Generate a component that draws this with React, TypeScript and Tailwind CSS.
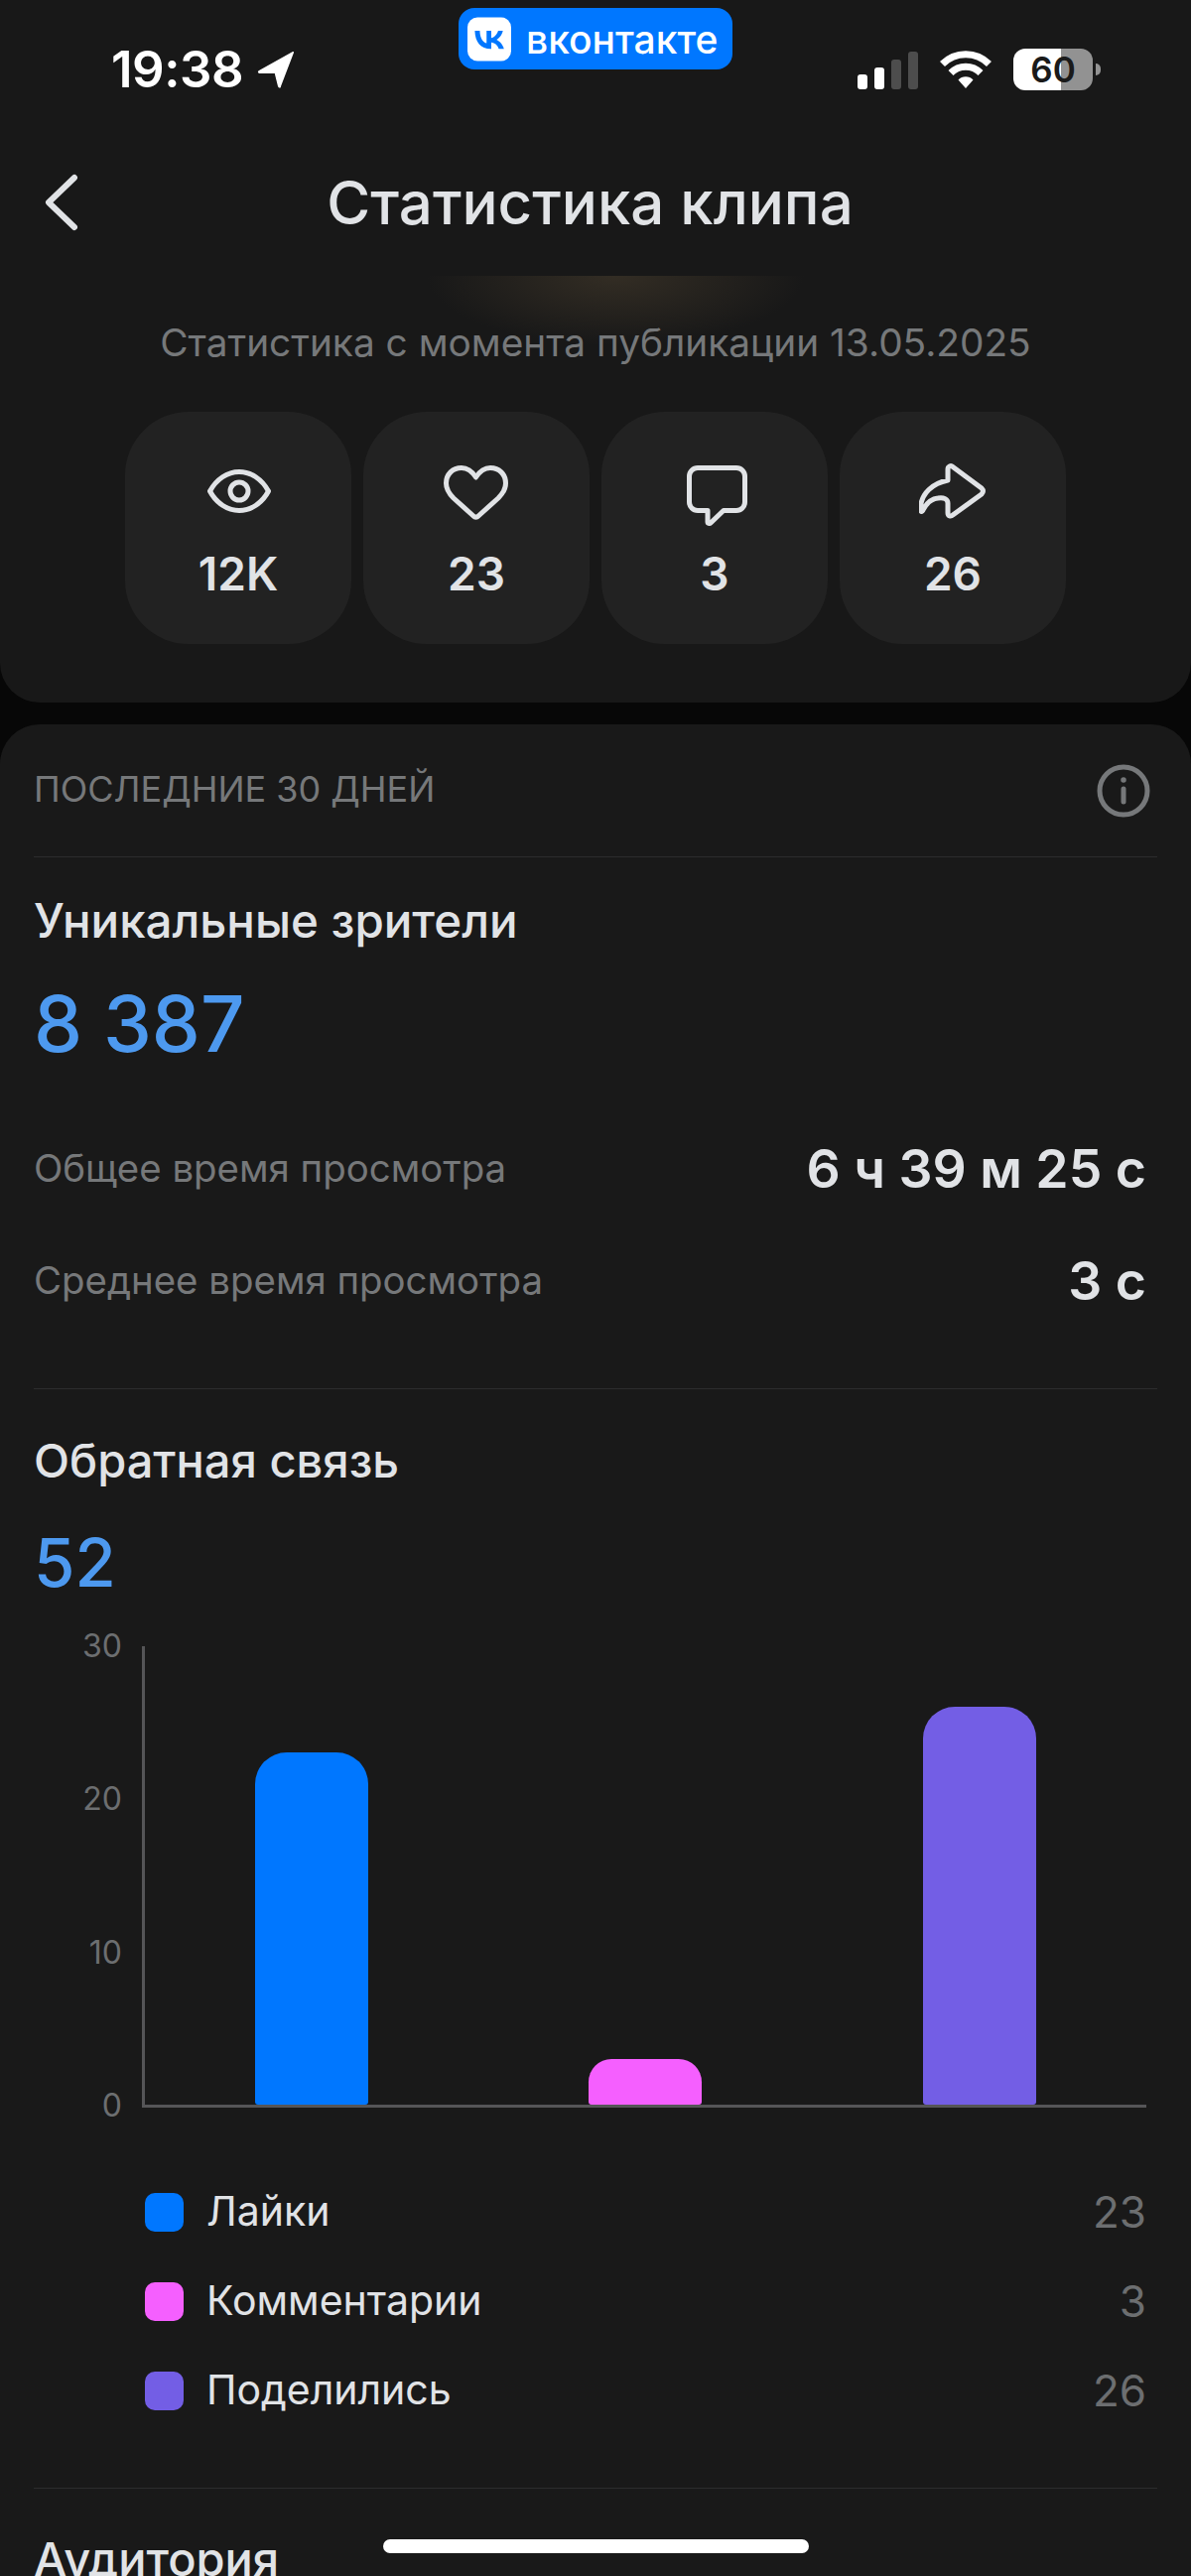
const stats = [
  { id: "views", value: "12K" },
  { id: "likes", value: "23" },
  { id: "comments", value: "3" },
  { id: "shares", value: "26" },
];

const bars = [
  { label: "Лайки", value: 23, bar: "bg-[#0077ff]" },
  { label: "Комментарии", value: 3, bar: "bg-[#f55fff]" },
  { label: "Поделились", value: 26, bar: "bg-[#735ee5]" },
];

const PX_PER_UNIT = 15.43;

function StatIcon({ id }: { id: string }) {
  let icon = (
    <g transform="translate(-1 0)">
      <path d="M30 6C30 3 33 1.5 35 3.5L64 25C66 27 66 29 64 31L35 52C33 54 30 53 30 50V40C30 36 26 34 20 35 12 36 8 41 5 47 3 50 2.5 48 2.5 45 3 30 15 20 30 17Z" />
    </g>
  );
  if (id === "views") {
    icon = (
      <g transform="translate(3 6)">
        <path d="M2.5 22C9 10 20 2.5 32 2.5S55 10 61.5 22C55 34 44 41.5 32 41.5S9 34 2.5 22Z" />
        <circle cx="32" cy="22" r="9" />
      </g>
    );
  } else if (id === "likes") {
    icon = (
      <g transform="translate(1 2)">
        <path d="M32.5 12C28 5 23 2.5 18 2.5 9 2.5 2.5 9 2.5 18 2.5 25 6 29 10 33L30 51C31.5 52.5 33.5 52.5 35 51L55 33C59 29 62.5 25 62.5 18 62.5 9 56 2.5 47 2.5 42 2.5 37 5 32.5 12Z" />
      </g>
    );
  } else if (id === "comments") {
    icon = (
      <g transform="translate(6 2)">
        <path d="M11 2.5H50A8.5 8.5 0 0 1 58.5 11V37A8.5 8.5 0 0 1 50 45.5H37L24 58C23 59 21 58.5 21 57V45.5H11A8.5 8.5 0 0 1 2.5 37V11A8.5 8.5 0 0 1 11 2.5Z" />
      </g>
    );
  }
  return (
    <svg width="68" height="66" viewBox="0 0 68 66" fill="none" stroke="#e1e3e6" strokeWidth="5" strokeLinejoin="round" strokeLinecap="round">
      {icon}
    </svg>
  );
}

function VkLogo() {
  return (
    <svg width="44" height="45" viewBox="0 0 48 48" className="shrink-0">
      <rect width="48" height="48" rx="11" fill="#ffffff" />
      <path
        fill="#0077ff"
        d="M25.54 34.58c-10.94 0-17.18-7.5-17.44-19.98h5.48c.18 9.16 4.22 13.04 7.42 13.84V14.6h5.16v7.9c3.16-.34 6.48-3.94 7.6-7.9h5.16c-.86 4.88-4.46 8.48-7.02 9.96 2.56 1.2 6.66 4.34 8.22 10.02h-5.68c-1.22-3.8-4.26-6.74-8.28-7.14v7.14h-.62Z"
      />
    </svg>
  );
}

function StatusBar() {
  return (
    <div className="relative flex h-[140px] items-center justify-between pl-[112px] pr-[91px]">
      <div className="flex items-center gap-[13px]">
        <span className="text-[51px] font-semibold leading-[52px] tracking-[-0.5px] text-white">19:38</span>
        <svg width="40" height="40" viewBox="0 0 40 40">
          <path d="M37 2 3 21c-2 1-1 3 1 3h14c1 0 1 0 1 1l3 12c1 2 3 2 3 0L38 3c0-1 0-1-1-1Z" fill="#ffffff" />
        </svg>
      </div>

      {/* VK pill */}
      <div className="absolute left-[462px] top-[8px] flex h-[62px] w-[276px] items-center gap-[15px] rounded-[16px] bg-[#0077ff] pl-[9px]">
        <VkLogo />
        <span className="text-[39px] font-medium leading-none text-white">вконтакте</span>
      </div>

      <div className="flex items-center">
        <div className="flex h-[40px] items-end gap-[7px]">
          <div className="h-[15px] w-[10px] rounded-[3px] bg-white" />
          <div className="h-[22px] w-[10px] rounded-[3px] bg-white" />
          <div className="h-[30px] w-[10px] rounded-[3px] bg-[#4d4d4d]" />
          <div className="h-[38px] w-[10px] rounded-[3px] bg-[#4d4d4d]" />
        </div>
        <svg width="54" height="40" viewBox="0 0 54 40" className="ml-[21px]" fill="none" stroke="#ffffff" strokeWidth="7">
          <path d="M3.5 14.5a33 33 0 0 1 47 0" />
          <path d="M12 23.5a21 21 0 0 1 30 0" />
          <path d="M19.5 30.5a10.5 10.5 0 0 1 15 0L27 39Z" fill="#ffffff" stroke="none" />
        </svg>
        <div className="ml-[21px] flex h-[42px] w-[80px] items-center justify-center rounded-[12px] bg-[linear-gradient(90deg,#ffffff_60%,#929292_60%)] text-[35px] font-semibold leading-none text-[#1a1a1a]">
          60
        </div>
        <div className="ml-[3px] h-[12px] w-[5px] rounded-r-full bg-[#929292]" />
      </div>
    </div>
  );
}

function Header() {
  return (
    <header className="relative h-[708px] rounded-b-[40px] bg-[#181818]">
      <StatusBar />
      <nav className="relative flex h-[128px] items-center justify-center pr-[11px]">
        <svg width="36" height="58" viewBox="0 0 36 58" className="absolute left-[43px] top-[35px]" fill="none" stroke="#e1e3e6" strokeWidth="6" strokeLinecap="round" strokeLinejoin="round">
          <path d="M32 4 6 29l26 25" />
        </svg>
        <h1 className="text-[60px] font-medium leading-none text-[#e1e3e6]">Статистика клипа</h1>
      </nav>

      {/* warm glow under the title */}
      <div className="absolute left-[430px] top-[278px] h-[70px] w-[380px] bg-[radial-gradient(ellipse_50%_100%_at_50%_0%,#332d24,transparent)]" />

      <p className="relative mt-[55px] text-center text-[38.8px] leading-[44px] text-[#76787a]">
        Статистика с момента публикации 13.05.2025
      </p>

      <div className="relative mt-[48px] flex justify-center gap-[12px]">
        {stats.map((s) => (
          <div key={s.id} className="flex h-[234px] w-[228px] flex-col items-center rounded-[64px] bg-[#222222]">
            <div className="mt-[52px]">
              <StatIcon id={s.id} />
            </div>
            <span className="mt-[17px] text-[46px] font-semibold leading-[56px] text-[#e1e3e6]">{s.value}</span>
          </div>
        ))}
      </div>
    </header>
  );
}

function Divider() {
  return <div className="mx-[34px] h-px bg-[#2c2c2d]" />;
}

function TimeRow({ label, value, className }: { label: string; value: string; className: string }) {
  return (
    <div className={`flex h-[60px] items-center justify-between ${className}`}>
      <span className="text-[38.4px] text-[#76787a]">{label}</span>
      <span className="text-[53.5px] font-semibold text-[#e1e3e6]">{value}</span>
    </div>
  );
}

function Chart() {
  return (
    <div className="mt-[46px] flex h-[465px]">
      <div className="flex h-[463px] w-[89px] flex-col justify-between text-[32px] text-[#6c6e70]">
        {["30", "20", "10", "0"].map((t) => (
          <div key={t} className="flex h-0 items-center justify-end">
            {t}
          </div>
        ))}
      </div>
      <div className="ml-[20px] grid flex-1 grid-cols-3 border-b-[3px] border-l-[3px] border-[#555557]">
        {bars.map((b) => {
          const height = b.value * PX_PER_UNIT;
          const radius = Math.min(32, height / 2);
          return (
            <div key={b.label} className="flex items-end justify-center">
              <div
                className={`w-[114px] rounded-b-[3px] ${b.bar}`}
                style={{ height, borderTopLeftRadius: radius, borderTopRightRadius: radius }}
              />
            </div>
          );
        })}
      </div>
    </div>
  );
}

function Legend() {
  return (
    <div className="mt-[60px] pl-[112px]">
      {bars.map((b) => (
        <div key={b.label} className="flex h-[90px] items-center">
          <div className={`h-[39px] w-[39px] rounded-[10px] ${b.bar}`} />
          <span className="mb-[1px] ml-[23px] flex-1 text-[41px] leading-none text-[#e1e3e6]">{b.label}</span>
          <span className="text-[44px] leading-none text-[#6c6e70]">{b.value}</span>
        </div>
      ))}
    </div>
  );
}

export default function App() {
  return (
    <div className="relative h-[2596px] w-[1200px] overflow-hidden bg-[#070707] [font-family:Inter,sans-serif]">
      <Header />
      <main className="mt-[22px] h-[1866px] rounded-t-[40px] bg-[#191919]">
        <div className="flex h-[133px] items-center justify-between pl-[34px] pr-[41px]">
          <span className="mb-[3px] text-[36px] leading-none text-[#76787a]">ПОСЛЕДНИЕ 30 ДНЕЙ</span>
          <svg width="54" height="54" viewBox="0 0 54 54" fill="none" stroke="#76787a" strokeWidth="5" strokeLinecap="round">
            <circle cx="27" cy="27" r="24" />
            <path d="M27 25v13" />
            <circle cx="27" cy="16" r="2" fill="#76787a" strokeWidth="1.5" />
          </svg>
        </div>
        <Divider />

        <section className="pl-[34px] pr-[45px] pt-[36px]">
          <h2 className="text-[47.5px] font-medium leading-[56px] text-[#e1e3e6]">Уникальные зрители</h2>
          <div className="mt-[34px] text-[78px] font-medium leading-[84px] text-[#4d99ef]">8 387</div>
          <TimeRow className="mt-[74px]" label="Общее время просмотра" value="6 ч 39 м 25 с" />
          <TimeRow className="mt-[53px]" label="Среднее время просмотра" value="3 с" />
        </section>
        <div className="mt-[78px]" />
        <Divider />

        <section className="pl-[34px] pr-[45px] pt-[44px]">
          <h2 className="text-[47px] font-medium leading-[56px] text-[#e1e3e6]">Обратная связь</h2>
          <div className="mt-[37px] text-[67px] font-medium leading-[76px] text-[#4d99ef]">52</div>
          <Chart />
          <Legend />
        </section>
        <div className="mt-[53px]" />
        <Divider />

        <section className="pl-[34px] pt-[43px]">
          <h2 className="text-[47px] font-medium leading-[56px] text-[#e1e3e6]">Аудитория</h2>
        </section>
      </main>

      {/* home indicator */}
      <div className="absolute bottom-[23px] left-[386px] h-[14px] w-[429px] rounded-full bg-white" />
    </div>
  );
}
